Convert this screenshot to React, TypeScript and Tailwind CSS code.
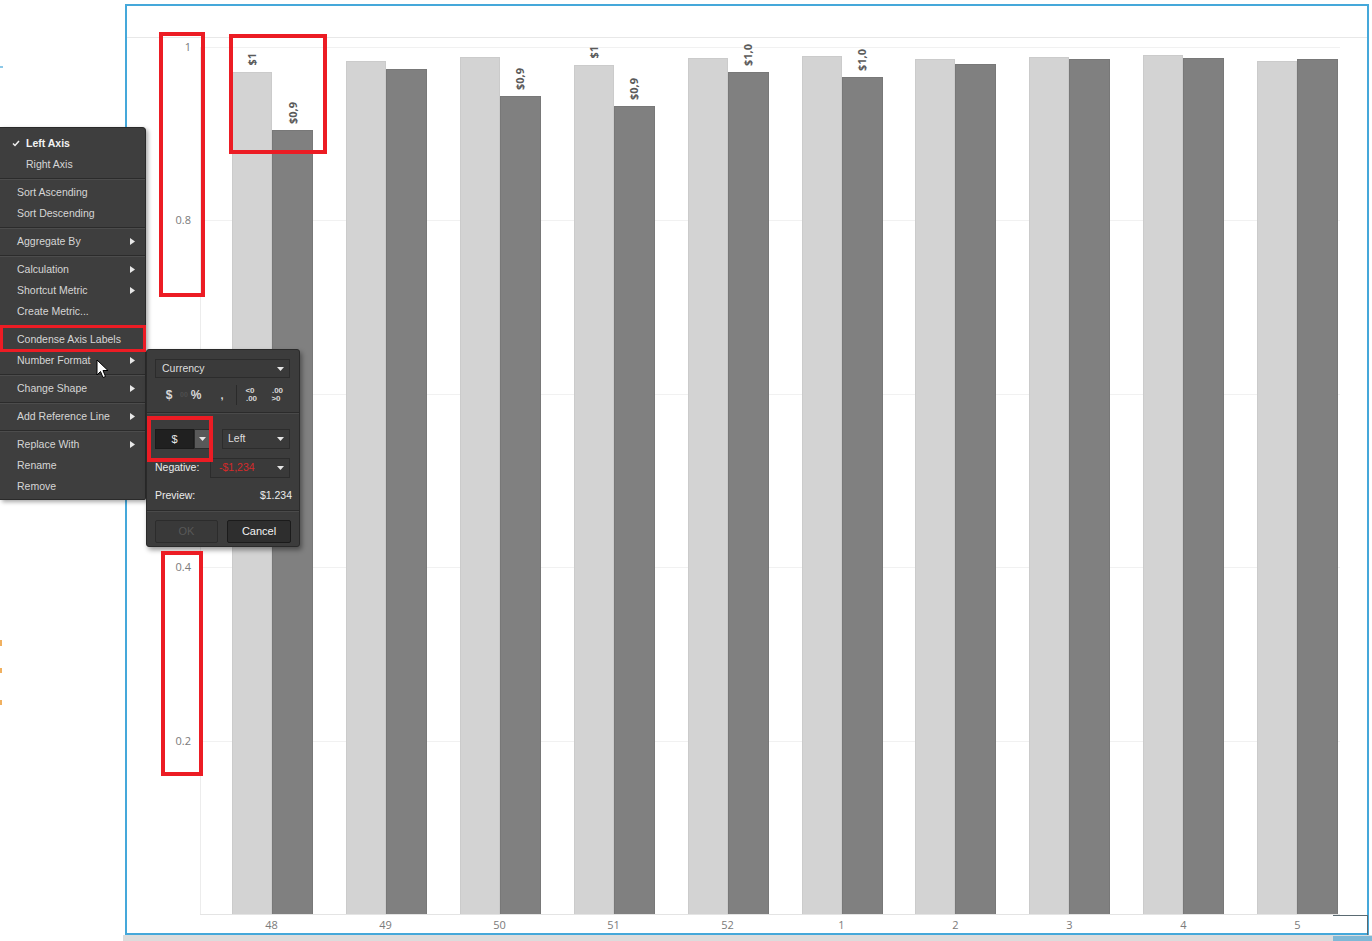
import React from "react";

type G = { x: string; a: number; b: number; la?: string; lb?: string };

const groups: G[] = [
  { x: "48", a: 72, b: 130, la: "$1", lb: "$0,9" },
  { x: "49", a: 61, b: 69 },
  { x: "50", a: 57, b: 96, lb: "$0,9" },
  { x: "51", a: 65, b: 106, la: "$1", lb: "$0,9" },
  { x: "52", a: 58, b: 72, lb: "$1,0" },
  { x: "1", a: 56, b: 77, lb: "$1,0" },
  { x: "2", a: 59, b: 64 },
  { x: "3", a: 57, b: 59 },
  { x: "4", a: 55, b: 58 },
  { x: "5", a: 61, b: 59 },
];

const BASE = 914;
const PLOT_H = 867;

function Bar({ top, label, light }: { top: number; label?: string; light: boolean }) {
  return (
    <div className={`flex flex-col items-center justify-end ${light ? "w-[40px]" : "w-[41px]"}`}>
      {label && (
        <div className="mb-[6px] [writing-mode:vertical-rl] rotate-180 text-[11px] font-bold leading-[12px] text-[#5a5a5a] [font-family:'Open_Sans',sans-serif]">
          {label}
        </div>
      )}
      <div
        className={
          light
            ? "w-full bg-[#d3d3d3] border border-[#cbcbcb] border-b-0"
            : "w-full bg-[#808080] border border-[#787878] border-b-0"
        }
        style={{ height: BASE - top }}
      />
    </div>
  );
}

function Caret({ className = "" }: { className?: string }) {
  return (
    <svg width="7" height="4" viewBox="0 0 7 4" className={className}>
      <path d="M0 0 L7 0 L3.5 4 Z" fill="#e6e6e6" />
    </svg>
  );
}

function Arrow() {
  return (
    <svg width="5" height="7" viewBox="0 0 5 7">
      <path d="M0 0 L5 3.5 L0 7 Z" fill="#e8e8e8" />
    </svg>
  );
}

function Sep() {
  return (
    <div className="h-[7px] flex flex-col justify-center">
      <div className="h-px bg-[#2b2b2b]" />
      <div className="h-px bg-[#4c4c4c]" />
    </div>
  );
}

function Item({ label, sub, check, bold }: { label: string; sub?: boolean; check?: boolean; bold?: boolean }) {
  const indent = label === "Left Axis" || label === "Right Axis";
  return (
    <div className="h-[21px] flex items-center pr-[10px]">
      <div className="w-[17px] h-full relative">
        {check && (
          <svg className="absolute left-[12px] top-[7px]" width="8" height="7" viewBox="0 0 8 7">
            <path d="M1 3.5 L3 5.5 L7 1" stroke="#f0f0f0" strokeWidth="1.5" fill="none" />
          </svg>
        )}
      </div>
      <span
        className={`flex-1 text-[10.5px] leading-[13px] ${bold ? "text-[#f2f2f2] font-bold" : "text-[#d6d6d6]"} ${
          indent ? "pl-[9px]" : ""
        }`}
      >
        {label}
      </span>
      {sub && <Arrow />}
    </div>
  );
}

export default function App() {
  const yTicks = [1, 0.8, 0.6, 0.4, 0.2];
  const yLabels: { v: number; t: string }[] = [
    { v: 1, t: "1" },
    { v: 0.8, t: "0.8" },
    { v: 0.4, t: "0.4" },
    { v: 0.2, t: "0.2" },
  ];
  return (
    <div className="relative w-[1372px] h-[941px] overflow-hidden bg-white [font-family:'Liberation_Sans',Arial,sans-serif]">
      {/* chart frame */}
      <div className="pl-[125px] pt-[4px]">
        <div className="w-[1244px] h-[931px] border-2 border-[#45a8da] flex flex-col">
          <div className="h-[31px]" />
          <div className="h-px bg-[#e8e8e8]" />
          <div className="h-[9px]" />
          <div className="flex h-[867px]">
            <div className="relative w-[73px] [font-family:'Open_Sans',sans-serif]">
              {yLabels.map((l) => (
                <div
                  key={l.t}
                  className="absolute right-[9px] text-[11px] leading-[14px] text-[#7a7a7a]"
                  style={{ top: (1 - l.v) * PLOT_H - 7 }}
                >
                  {l.t}
                </div>
              ))}
            </div>
            <div className="relative w-[1140px] border-l border-[#ececec]">
              {yTicks.map((v) => (
                <div
                  key={v}
                  className="absolute left-0 right-0 h-px bg-[#f1f1f1]"
                  style={{ top: (1 - v) * PLOT_H }}
                />
              ))}
              <div className="relative flex h-full items-end">
                {groups.map((g) => (
                  <div key={g.x} className="w-[114px] h-full flex items-end pl-[31px]">
                    <Bar top={g.a} label={g.la} light />
                    <Bar top={g.b} label={g.lb} light={false} />
                  </div>
                ))}
              </div>
            </div>
          </div>
          <div className="flex flex-1">
            <div className="w-[73px]" />
            <div className="w-[1140px] border-t border-[#e4e4e4] flex [font-family:'Open_Sans',sans-serif]">
              {groups.map((g) => (
                <div key={g.x} className="w-[114px] pl-[31px]">
                  <div className="w-[81px] pt-[3px] text-center text-[11px] leading-[14px] text-[#7a7a7a]">{g.x}</div>
                </div>
              ))}
            </div>
          </div>
        </div>
      </div>
      <div className="ml-[123px] h-[6px] bg-[#dcdcdc]" />

      {/* resize corner */}
      <div className="absolute left-[1333px] top-[915px] w-[35px] h-[20px] border-t border-r border-[#5a6a72]" />
      <div className="absolute left-[1333px] top-[936px] w-[39px] h-[5px] bg-[#7fb8d6]" />

      {/* faint left strip marks */}
      <div className="absolute left-0 top-[640px] w-[2px] h-[6px] bg-[#f0b060]" />
      <div className="absolute left-0 top-[668px] w-[2px] h-[5px] bg-[#f0b060]" />
      <div className="absolute left-0 top-[700px] w-[2px] h-[5px] bg-[#f0b060]" />
      <div className="absolute left-0 top-[66px] w-[3px] h-[2px] bg-[#8cc8e8]" />

      {/* context menu */}
      <div className="absolute left-0 top-[127px] w-[146px] h-[373px] bg-[#3e3e3e] border border-l-0 border-[#2a2a2a] rounded-tr-[4px] rounded-br-[2px] shadow-[2px_2px_4px_rgba(0,0,0,0.35)] pt-[5px]">
        <Item label="Left Axis" check bold />
        <Item label="Right Axis" />
        <Sep />
        <Item label="Sort Ascending" />
        <Item label="Sort Descending" />
        <Sep />
        <Item label="Aggregate By" sub />
        <Sep />
        <Item label="Calculation" sub />
        <Item label="Shortcut Metric" sub />
        <Item label="Create Metric..." />
        <Sep />
        <Item label="Condense Axis Labels" />
        <Item label="Number Format" sub />
        <Sep />
        <Item label="Change Shape" sub />
        <Sep />
        <Item label="Add Reference Line" sub />
        <Sep />
        <Item label="Replace With" sub />
        <Item label="Rename" />
        <Item label="Remove" />
      </div>

      {/* number format popup */}
      <div className="absolute left-[146px] top-[349px] w-[154px] h-[198px] bg-[#3c3c3c] border border-[#2a2a2a] rounded-[3px] shadow-[2px_3px_5px_rgba(0,0,0,0.4)] flex flex-col">
        <div className="mt-[9px] ml-[8px] w-[135px] h-[19px] bg-[#3a3a3a] border border-[#2c2c2c] flex items-center justify-between pl-[6px] pr-[5px]">
          <span className="text-[10.5px] text-[#dedede]">Currency</span>
          <Caret />
        </div>
        <div className="mt-[8px] h-[18px] flex items-center pl-[9px] text-[#d8d8d8]">
          <div className="w-[26px] text-center text-[12px] font-bold">$</div>
          <div className="w-[28px] text-center text-[12px] font-bold relative">
            <span className="absolute left-[-2px] top-[4px] text-[7px] text-[#4e4e4e]">00</span>%
          </div>
          <div className="w-[24px] text-center text-[11px] font-bold">,</div>
          <div className="w-[4px] flex justify-center">
            <div className="w-px h-[20px] bg-[#2a2a2a]" />
          </div>
          <div className="w-[24px] flex flex-col items-center text-[8px] leading-[8px] font-bold">
            <span>&lt;0</span>
            <span className="pl-[3px]">.00</span>
          </div>
          <div className="w-[28px] flex flex-col items-center text-[8px] leading-[8px] font-bold">
            <span className="pl-[3px]">.00</span>
            <span>&gt;0</span>
          </div>
        </div>
        <div className="mt-[8px] flex flex-col">
          <div className="h-px bg-[#2b2b2b]" />
          <div className="h-px bg-[#4a4a4a]" />
        </div>
        <div className="mt-[15px] h-[20px] flex items-center">
          <div className="ml-[8px] w-[39px] h-full bg-[#202020] border border-[#1a1a1a] flex items-center justify-center text-[11px] text-[#e8e8e8]">
            $
          </div>
          <div className="w-[17px] h-full bg-[#595959] border border-[#2a2a2a] flex items-center justify-center">
            <Caret />
          </div>
          <div className="ml-[11px] w-[68px] h-full bg-[#3a3a3a] border border-[#2c2c2c] flex items-center justify-between pl-[5px] pr-[5px]">
            <span className="text-[10.5px] text-[#dedede]">Left</span>
            <Caret />
          </div>
        </div>
        <div className="mt-[9px] h-[20px] flex items-center">
          <span className="ml-[8px] w-[55px] text-[10.5px] text-[#ececec]">Negative:</span>
          <div className="w-[80px] h-full bg-[#3a3a3a] border border-[#2c2c2c] flex items-center justify-between pl-[8px] pr-[5px]">
            <span className="text-[10.5px] text-[#d42a2a]">-$1,234</span>
            <Caret />
          </div>
        </div>
        <div className="mt-[10px] h-[16px] flex items-center justify-between pl-[8px] pr-[7px]">
          <span className="text-[10.5px] text-[#ececec]">Preview:</span>
          <span className="text-[10.5px] text-[#ececec]">$1.234</span>
        </div>
        <div className="mt-[6px] flex flex-col">
          <div className="h-px bg-[#2b2b2b]" />
          <div className="h-px bg-[#4a4a4a]" />
        </div>
        <div className="mt-[8px] flex pl-[8px] gap-[9px]">
          <div className="w-[63px] h-[23px] bg-[#393939] border border-[#2c2c2c] rounded-[2px] flex items-center justify-center text-[11px] text-[#585858]">
            OK
          </div>
          <div className="w-[64px] h-[23px] bg-[#2e2e2e] border border-[#1b1b1b] rounded-[2px] flex items-center justify-center text-[11px] text-[#f2f2f2]">
            Cancel
          </div>
        </div>
      </div>

      {/* mouse cursor */}
      <svg className="absolute left-[96px] top-[359px]" width="13" height="20" viewBox="0 0 13 20">
        <path d="M1 1 L1 16 L4.5 12.5 L7 18.5 L9.5 17.5 L7 11.5 L12 11.5 Z" fill="#ffffff" stroke="#000000" strokeWidth="1" strokeLinejoin="round" />
      </svg>

      {/* red annotation boxes */}
      <div className="absolute left-[159px] top-[32px] w-[46px] h-[265px] border-[4px] border-[#ec1c24]" />
      <div className="absolute left-[229px] top-[34px] w-[98px] h-[120px] border-[4px] border-[#ec1c24]" />
      <div className="absolute left-[161px] top-[551px] w-[42px] h-[225px] border-[4px] border-[#ec1c24]" />
      <div className="absolute left-0 top-[325px] w-[146px] h-[27px] border-[3px] border-[#ec1c24]" />
      <div className="absolute left-[147px] top-[416px] w-[66px] h-[46px] border-[4px] border-[#ec1c24]" />
    </div>
  );
}
